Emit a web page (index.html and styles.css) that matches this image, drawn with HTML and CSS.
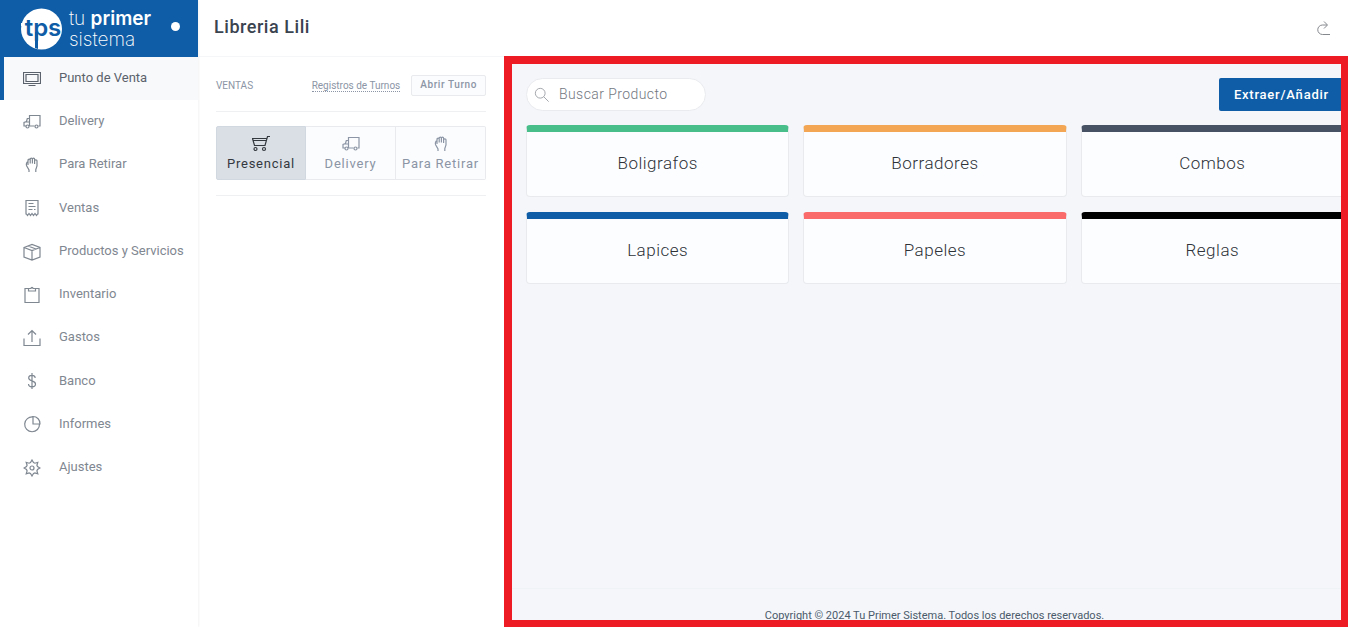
FILE: index.html
```html
<!DOCTYPE html>
<html lang="es">
<head>
<meta charset="utf-8">
<meta name="viewport" content="width=device-width, initial-scale=1">
<title>Libreria Lili</title>
<link rel="stylesheet" href="styles.css">
</head>
<body>
<svg class="sprite" aria-hidden="true">
  <symbol id="i-screen" viewBox="0 0 18 18"><path d="M.500 2.500h17v11h-17zM3 4.500h12v7H3zM5.500 15.500h7"/></symbol>
  <symbol id="i-truck" viewBox="0 0 18 18"><path d="M6.500 13V2.500h10.500v10.500h-1.500M11.500 13h-5M3 13H1V9.500l2.500-1 .8-3h2.200M1.500 9h5"/><circle cx="4.500" cy="13.500" r="1.500"/><circle cx="13.500" cy="13.500" r="1.500"/></symbol>
  <symbol id="i-hand" viewBox="0 0 18 18"><path d="M6 16v-2L3.600 9.800C3 8.300 3.600 6 5 5.500V9M5 9V4.300c0-1.600 2.200-1.600 2.200 0V7.500 3.300c0-1.500 2.200-1.500 2.200 0V7.500 3.300c0-1.500 2.200-1.500 2.200 0V8 4.800c0-1.300 2.400-1.300 2.400 0V10l-1.200 3.500V16"/></symbol>
  <symbol id="i-receipt" viewBox="0 0 18 18"><path d="M3 15.500V1.500h12v14M5.500 4.500h5M5.500 7.500h7M5.500 10.500h4M11 10.500h1.500M3 14.500l1.500 2L6 14.500l1.500 2L9 14.500l1.500 2 1.500-2 1.500 2 1.500-2"/></symbol>
  <symbol id="i-box" viewBox="0 0 18 18"><path d="M1 4.500 9 1.500l8 3v9.500l-8 3-8-3zM1 4.500l8 3 8-3M9 7.500V17M5 3l8 3"/></symbol>
  <symbol id="i-clip" viewBox="0 0 18 18"><path d="M5.500 2.500h-3.500v14h14v-14h-3.500M5.500 5V2.500H8c0-1.500 2-1.500 2 0h2.500V5z"/></symbol>
  <symbol id="i-upload" viewBox="0 0 18 18"><path d="M1 9.500v7h16v-7M9 13V1.500M5 5.500l4-4 4 4"/></symbol>
  <symbol id="i-dollar" viewBox="0 0 18 18"><path d="M9 1v16M12.300 5.800C12 4 10.800 3.300 9 3.300c-2 0-3.300 1-3.300 2.700C5.700 9.700 12.500 8 12.500 12c0 1.800-1.500 2.800-3.500 2.800S5.600 13.800 5.500 12"/></symbol>
  <symbol id="i-pie" viewBox="0 0 18 18"><path d="M10 2a7.400 7.400 0 1 0 6.500 7M10 1.500V9h7a7 7 0 0 0-7-7.500z"/></symbol>
  <symbol id="i-gear" viewBox="0 0 18 18"><circle cx="9" cy="9" r="2"/><path d="M9 1l1.500 2.600 1.400.6 2.900-.9-.9 2.900.6 1.300L17 9l-2.500 1.500-.6 1.400.9 2.900-2.900-.9-1.400.6L9 17l-1.500-2.500-1.400-.6-2.900.9.9-2.900-.6-1.400L1 9l2.500-1.500.6-1.300-.9-2.900 2.900.9 1.400-.6z"/></symbol>
  <symbol id="i-cart" viewBox="0 0 18 18"><path d="M18 1.500h-2.500L13 10.500H2.500L.500 3.500h14.200M1 5.500h13"/><circle cx="3.500" cy="14" r="1.500"/><circle cx="12" cy="14" r="1.500"/></symbol>
  <symbol id="i-search" viewBox="0 0 18 18"><circle cx="7" cy="7" r="5.500"/><path d="M11 11l5.500 5.500"/></symbol>
  <symbol id="i-redo" viewBox="0 0 18 18"><path d="M16 15.500H8.500a4.700 4.700 0 0 1 0-9.500h4.500M10 2.500 13.500 6 10 9.500"/></symbol>
</svg>

<div class="app">
  <aside class="sidebar">
    <div class="brand">
      <svg class="brand-mark" viewBox="0 0 42 42" role="img" aria-label="tps">
        <circle class="mark-disc" cx="21.500" cy="21" r="20.500"/>
        <path class="mark-disc" d="M1 15h3v3H1z"/>
        <path class="mark-stem" d="M15 24h3v17l-3-1z"/>
        <text class="mark-text" x="23" y="28" text-anchor="middle">tps</text>
      </svg>
      <div class="brand-name"><span>tu <b>primer</b></span><span>sistema</span></div>
      <span class="brand-dot"></span>
    </div>
    <nav class="menu">
      <a class="menu-item active" href="#"><svg class="icon"><use href="#i-screen"/></svg>Punto de Venta</a>
      <a class="menu-item" href="#"><svg class="icon"><use href="#i-truck"/></svg>Delivery</a>
      <a class="menu-item" href="#"><svg class="icon"><use href="#i-hand"/></svg>Para Retirar</a>
      <a class="menu-item" href="#"><svg class="icon"><use href="#i-receipt"/></svg>Ventas</a>
      <a class="menu-item" href="#"><svg class="icon"><use href="#i-box"/></svg>Productos y Servicios</a>
      <a class="menu-item" href="#"><svg class="icon"><use href="#i-clip"/></svg>Inventario</a>
      <a class="menu-item" href="#"><svg class="icon"><use href="#i-upload"/></svg>Gastos</a>
      <a class="menu-item" href="#"><svg class="icon"><use href="#i-dollar"/></svg>Banco</a>
      <a class="menu-item" href="#"><svg class="icon"><use href="#i-pie"/></svg>Informes</a>
      <a class="menu-item" href="#"><svg class="icon"><use href="#i-gear"/></svg>Ajustes</a>
    </nav>
  </aside>

  <div class="page">
    <header class="topbar">
      <h1 class="title">Libreria Lili</h1>
      <button class="icon-button" type="button" aria-label="Salir"><svg class="icon"><use href="#i-redo"/></svg></button>
    </header>
    <div class="content">
      <section class="ticket">
        <div class="ticket-head">
          <h2 class="ticket-title">VENTAS</h2>
          <a class="ticket-link" href="#">Registros de Turnos</a>
          <button class="small-button" type="button">Abrir Turno</button>
        </div>
        <div class="modes">
          <button class="mode selected" type="button"><svg class="icon"><use href="#i-cart"/></svg>Presencial</button>
          <button class="mode" type="button"><svg class="icon"><use href="#i-truck"/></svg>Delivery</button>
          <button class="mode" type="button"><svg class="icon"><use href="#i-hand"/></svg>Para Retirar</button>
        </div>
      </section>

      <main class="workspace">
        <div class="catalog">
          <div class="tools">
            <label class="search"><svg class="icon"><use href="#i-search"/></svg><input class="search-input" type="text" placeholder="Buscar Producto" aria-label="Buscar Producto"></label>
            <button class="primary-button" type="button">Extraer/Añadir</button>
          </div>
          <div class="cards">
            <button class="card green" type="button">Boligrafos</button>
            <button class="card orange" type="button">Borradores</button>
            <button class="card slate" type="button">Combos</button>
            <button class="card blue" type="button">Lapices</button>
            <button class="card coral" type="button">Papeles</button>
            <button class="card black" type="button">Reglas</button>
          </div>
        </div>
        <footer class="footer">Copyright © 2024 Tu Primer Sistema. Todos los derechos reservados.</footer>
      </main>
    </div>
  </div>
</div>
</body>
</html>
```
FILE: styles.css
```css
:root { --track: .03em; --track-wide: .06em; }
* { box-sizing: border-box; }
body { margin: 0; font-family: Roboto, "Liberation Sans", sans-serif; font-size: 13px; color: #3e4b5b; background: #fff; }
button { font: inherit; margin: 0; cursor: pointer; }
a { color: inherit; text-decoration: none; }
.sprite { display: none; }
.icon { width: 18px; height: 18px; flex: none; fill: none; stroke: currentColor; stroke-width: 1.2; }

.app { display: grid; grid-template-columns: 198px 1fr; height: 100vh; overflow: hidden; }
.sidebar { box-shadow: 1px 0 2px rgba(0, 0, 0, .05); }
.brand { display: flex; align-items: center; height: 57px; padding: 0 18px 0 20px; background: #0f5da6; color: #fff; }
.brand-mark { width: 42px; height: 42px; }
.mark-disc { fill: #fff; }
.mark-stem { fill: #0f5da6; }
.mark-text { font: 600 24px Inter, sans-serif; fill: #0f5da6; }
.brand-name { display: flex; flex-direction: column; margin-left: 7px; font: 200 19px/21px Inter, sans-serif; }
.brand-name span { white-space: nowrap; }
.brand-name b { font-weight: 600; }
.brand-dot { width: 9px; height: 9px; margin: 0 0 4px auto; border-radius: 50%; background: #fff; }

.menu-item { display: flex; align-items: center; gap: 18px; padding: 11px 12px 13px 23px; line-height: 1.48; color: #7f8791; white-space: nowrap; }
.menu-item .icon { margin: 1px 0 -1px; }
.menu-item.active { padding-left: 19px; border-left: 4px solid #0f5da6; background: #f8f9fb; color: #5b626b; }

.page { display: flex; flex-direction: column; min-width: 0; }
.topbar { display: flex; align-items: center; justify-content: space-between; height: 56px; padding: 0 16px; }
.title { margin: 0 0 3px; font-size: 18px; font-weight: 500; letter-spacing: var(--track); color: #3a4350; }
.icon-button { display: flex; padding: 0; border: 0; background: none; color: #85888d; }
.icon-button .icon { stroke-width: 1; }
.content { display: grid; grid-template-columns: 306px 1fr; flex: 1; min-height: 0; }

.ticket { padding: 0 18px; border-top: 1px solid #f5f6f7; color: #8b95a5; }
.ticket-head { display: flex; align-items: center; height: 55px; padding-top: 2px; border-bottom: 1px solid #eef0f2; font-size: 10px; }
.ticket-title { margin: 0 auto 0 0; font-size: 10px; font-weight: 400; }
.ticket-link { margin: 2px 11px 0 0; line-height: 11px; border-bottom: 1px dotted #8b95a5; }
.small-button { height: 21px; padding: 0 8px 2px; border: 1px solid #e8eaed; border-radius: 2px; background: #fbfcfe; color: #8b95a5; font-weight: 500; letter-spacing: var(--track-wide); }
.modes { display: grid; grid-template-columns: repeat(3, 1fr); padding: 14px 0 15px; border-bottom: 1px solid #eef0f2; }
.mode { display: flex; flex-direction: column; align-items: center; gap: 2px; height: 54px; padding: 8px 0 0; border: 1px solid #e8eaed; border-left-width: 0; background: #fbfcfe; color: #8b95a5; line-height: 17px; letter-spacing: var(--track-wide); white-space: nowrap; }
.mode:last-child { border-radius: 0 2px 2px 0; }
.mode.selected { border: 1px solid #d1d8df; border-radius: 2px 0 0 2px; background: #dadfe6; color: #33383e; }

.workspace { display: flex; flex-direction: column; min-width: 0; overflow: hidden; border: 8px solid #ed1c24; border-right-width: 7px; border-bottom-width: 7px; background: #f4f6fa; }
.catalog { flex: 1; margin-right: -3px; padding: 14px 0 0 14px; }
.tools { display: flex; justify-content: space-between; margin-bottom: 14px; }
.search { display: flex; align-items: center; gap: 9px; width: 180px; height: 33px; padding: 0 8px 2px 7px; border: 1px solid #e9ebee; border-radius: 17px; background: #fff; color: #9a9da3; }
.search .icon { width: 16px; height: 16px; margin-top: 2px; stroke-width: 1; }
.search-input { flex: 1; min-width: 0; padding: 0; border: 0; outline: 0; background: none; font: 300 14px Roboto, sans-serif; letter-spacing: var(--track); color: #4b5058; }
.search-input::placeholder { color: #73787f; opacity: 1; }
.primary-button { height: 33px; padding: 0 15px; border: 0; border-radius: 2px; background: #0f5da6; color: #fff; font-weight: 500; letter-spacing: var(--track-wide); }
.cards { display: grid; grid-template-columns: repeat(3, 1fr); gap: 15px 14px; }
.card { height: 72px; padding: 0 0 2px; border: 1px solid #e8eaed; border-top: 7px solid; border-radius: 4px; background: #fcfdff; color: #2d3238; font-size: 17px; font-weight: 300; letter-spacing: var(--track); }
.green { border-top-color: #48bf8b; }
.orange { border-top-color: #f3a755; }
.slate { border-top-color: #475365; }
.blue { border-top-color: #0f5da6; }
.coral { border-top-color: #fa6a6a; }
.black { border-top-color: #000; }
.footer { height: 32px; padding: 20px 0 0 16px; border-top: 1px solid #f0f3f5; font-size: 11px; line-height: 14px; text-align: center; color: #4b5a6a; }
```
